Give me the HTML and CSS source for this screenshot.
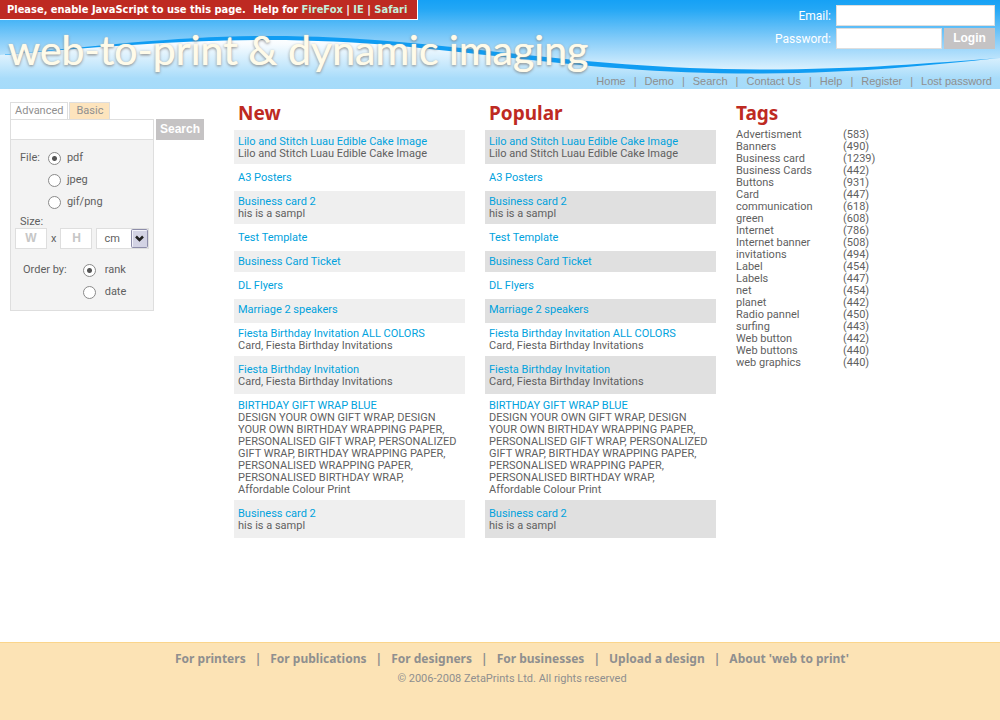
FILE: index.html
```html
<!DOCTYPE html>
<html lang="en">
<head>
<meta charset="utf-8">
<title>web-to-print &amp; dynamic imaging</title>
<link rel="stylesheet" href="styles.css">
</head>
<body>
<header class="header">
  <svg class="wave" viewBox="0 0 1000 89" preserveAspectRatio="none" aria-hidden="true">
    <defs>
      <linearGradient id="sky" x1="0" y1="0" x2="0" y2="89" gradientUnits="userSpaceOnUse">
        <stop offset="0" stop-color="#16a1f5"/>
        <stop offset="0.1" stop-color="#23a7f5"/>
        <stop offset="0.45" stop-color="#87cdf9"/>
        <stop offset="0.8" stop-color="#e0f3fe"/>
      </linearGradient>
      <linearGradient id="haze" x1="0" y1="36" x2="0" y2="89" gradientUnits="userSpaceOnUse">
        <stop offset="0" stop-color="#ffffff"/>
        <stop offset="0.15" stop-color="#f8fcff"/>
        <stop offset="0.8" stop-color="#a8dcfa"/>
        <stop offset="1" stop-color="#a5dbfa"/>
      </linearGradient>
    </defs>
    <rect width="1000" height="89" fill="url(#sky)"/>
    <path d="M0 55C100 47 180 38 270 38C440 38 560 72 760 72C860 72 930 64 1000 58V89H0Z" fill="url(#haze)"/>
    <path d="M0 55C100 46 180 36 270 36C440 36 560 69 760 69.500C860 69.500 930 63 1000 58C930 65 860 73 760 73.500C560 74 440 40 270 40C180 40 100 47 0 55Z" fill="#109df3"/>
  </svg>
  <div class="brand">
    <p class="notice">Please, enable JavaScript to use this page. <span class="help">Help for <a href="#">FireFox</a> | <a href="#">IE</a> | <a href="#">Safari</a></span></p>
    <h1 class="title">web-to-print &amp; dynamic imaging</h1>
  </div>
  <div class="account">
    <form class="login">
      <label for="email">Email:</label>
      <input class="box wide" id="email" type="email">
      <label for="password">Password:</label>
      <input class="box" id="password" type="password">
      <button class="btn" type="button">Login</button>
    </form>
    <nav class="topnav">
      <a href="#">Home</a><span>|</span><a href="#">Demo</a><span>|</span><a href="#">Search</a><span>|</span><a href="#">Contact Us</a><span>|</span><a href="#">Help</a><span>|</span><a href="#">Register</a><span>|</span><a href="#">Lost password</a>
    </nav>
  </div>
</header>

<main class="main">
  <form class="search">
    <div class="tabs">
      <button class="tab" type="button">Advanced</button>
      <button class="tab basic" type="button">Basic</button>
    </div>
    <div class="query">
      <input class="box keywords" type="search" aria-label="Keywords">
      <button class="btn" type="button">Search</button>
    </div>
    <div class="panel">
      <div class="group file" role="radiogroup" aria-labelledby="file-label">
        <span id="file-label">File:</span>
        <div class="choices">
          <label><input type="radio" name="file" checked>pdf</label>
          <label><input type="radio" name="file">jpeg</label>
          <label><input type="radio" name="file">gif/png</label>
        </div>
      </div>
      <div class="size-title">Size:</div>
      <div class="size">
        <input class="box dim" placeholder="W" aria-label="Width">
        <span>x</span>
        <input class="box dim" placeholder="H" aria-label="Height">
        <div class="unit">
          <select class="box" aria-label="Unit"><option>cm</option><option>in</option></select>
          <svg class="arrow" viewBox="0 0 17 19" aria-hidden="true">
            <rect x="0.500" y="0.500" width="16" height="18" rx="1" fill="#d3d3e4" stroke="#8d8da9"/>
            <path d="M1.500 17.500V1.500H15.500" fill="none" stroke="#f3f3fa"/>
            <path d="M5 7.500L8.500 11L12 7.500" fill="none" stroke="#222" stroke-width="2.500"/>
          </svg>
        </div>
      </div>
      <div class="group order" role="radiogroup" aria-labelledby="order-label">
        <span id="order-label">Order by:</span>
        <div class="choices">
          <label><input type="radio" name="order" checked>rank</label>
          <label><input type="radio" name="order">date</label>
        </div>
      </div>
    </div>
  </form>

  <section>
    <h2>New</h2>
    <ul class="list">
      <li class="first"><a href="#">Lilo and Stitch Luau Edible Cake Image</a><p>Lilo and Stitch Luau Edible Cake Image</p></li>
      <li class="spaced"><a href="#">A3 Posters</a></li>
      <li><a href="#">Business card 2</a><p>his is a sampl</p></li>
      <li class="spaced"><a href="#">Test Template</a></li>
      <li><a href="#">Business Card Ticket</a></li>
      <li class="spaced"><a href="#">DL Flyers</a></li>
      <li class="loose"><a href="#">Marriage 2 speakers</a></li>
      <li><a href="#">Fiesta Birthday Invitation ALL COLORS</a><p>Card, Fiesta Birthday Invitations</p></li>
      <li class="roomy"><a href="#">Fiesta Birthday Invitation</a><p>Card, Fiesta Birthday Invitations</p></li>
      <li class="even"><a href="#">BIRTHDAY GIFT WRAP BLUE</a><p>DESIGN YOUR OWN GIFT WRAP, DESIGN<br>YOUR OWN BIRTHDAY WRAPPING PAPER,<br>PERSONALISED GIFT WRAP, PERSONALIZED<br>GIFT WRAP, BIRTHDAY WRAPPING PAPER,<br>PERSONALISED WRAPPING PAPER,<br>PERSONALISED BIRTHDAY WRAP,<br>Affordable Colour Print</p></li>
      <li class="roomy"><a href="#">Business card 2</a><p>his is a sampl</p></li>
    </ul>
  </section>

  <section>
    <h2>Popular</h2>
    <ul class="list popular">
      <li class="first"><a href="#">Lilo and Stitch Luau Edible Cake Image</a><p>Lilo and Stitch Luau Edible Cake Image</p></li>
      <li class="spaced"><a href="#">A3 Posters</a></li>
      <li><a href="#">Business card 2</a><p>his is a sampl</p></li>
      <li class="spaced"><a href="#">Test Template</a></li>
      <li><a href="#">Business Card Ticket</a></li>
      <li class="spaced"><a href="#">DL Flyers</a></li>
      <li class="loose"><a href="#">Marriage 2 speakers</a></li>
      <li><a href="#">Fiesta Birthday Invitation ALL COLORS</a><p>Card, Fiesta Birthday Invitations</p></li>
      <li class="roomy"><a href="#">Fiesta Birthday Invitation</a><p>Card, Fiesta Birthday Invitations</p></li>
      <li class="even"><a href="#">BIRTHDAY GIFT WRAP BLUE</a><p>DESIGN YOUR OWN GIFT WRAP, DESIGN<br>YOUR OWN BIRTHDAY WRAPPING PAPER,<br>PERSONALISED GIFT WRAP, PERSONALIZED<br>GIFT WRAP, BIRTHDAY WRAPPING PAPER,<br>PERSONALISED WRAPPING PAPER,<br>PERSONALISED BIRTHDAY WRAP,<br>Affordable Colour Print</p></li>
      <li class="roomy"><a href="#">Business card 2</a><p>his is a sampl</p></li>
    </ul>
  </section>

  <section class="tags">
    <h2>Tags</h2>
    <table>
      <tr><td>Advertisment</td><td>(583)</td></tr>
      <tr><td>Banners</td><td>(490)</td></tr>
      <tr><td>Business card</td><td>(1239)</td></tr>
      <tr><td>Business Cards</td><td>(442)</td></tr>
      <tr><td>Buttons</td><td>(931)</td></tr>
      <tr><td>Card</td><td>(447)</td></tr>
      <tr><td>communication</td><td>(618)</td></tr>
      <tr><td>green</td><td>(608)</td></tr>
      <tr><td>Internet</td><td>(786)</td></tr>
      <tr><td>Internet banner</td><td>(508)</td></tr>
      <tr><td>invitations</td><td>(494)</td></tr>
      <tr><td>Label</td><td>(454)</td></tr>
      <tr><td>Labels</td><td>(447)</td></tr>
      <tr><td>net</td><td>(454)</td></tr>
      <tr><td>planet</td><td>(442)</td></tr>
      <tr><td>Radio pannel</td><td>(450)</td></tr>
      <tr><td>surfing</td><td>(443)</td></tr>
      <tr><td>Web button</td><td>(442)</td></tr>
      <tr><td>Web buttons</td><td>(440)</td></tr>
      <tr><td>web graphics</td><td>(440)</td></tr>
    </table>
  </section>
</main>

<footer class="footer">
  <nav class="footnav">
    <a href="#">For printers</a><span>|</span><a href="#">For publications</a><span>|</span><a href="#">For designers</a><span>|</span><a href="#">For businesses</a><span>|</span><a href="#">Upload a design</a><span>|</span><a href="#">About 'web to print'</a>
  </nav>
  <p>© 2006-2008 ZetaPrints Ltd. All rights reserved</p>
</footer>
</body>
</html>
```
FILE: styles.css
```css
* { box-sizing: border-box; }

body {
  margin: 0;
  min-height: 100vh;
  display: flex;
  flex-direction: column;
  background: #fff;
  color: #5f5f5f;
  font: 11px/12px Tahoma, Roboto, sans-serif;
}

a { color: inherit; text-decoration: none; }
p { margin: 0; }
input, select, button { font: inherit; color: inherit; margin: 0; }

/* Header */
.header {
  position: relative;
  display: flex;
  justify-content: space-between;
  min-height: 89px;
}
.wave { position: absolute; inset: 0; width: 100%; height: 100%; }
.brand, .account { position: relative; }
.brand { display: flex; flex-direction: column; align-items: flex-start; white-space: nowrap; }
.notice {
  padding: 3px 10px 3px 7px;
  background: #be2a22;
  border-right: 1px solid #fff;
  border-bottom: 1px solid #fff;
  color: #fff;
  font: bold 11px/13px Tahoma, "DejaVu Sans Condensed", sans-serif;
  word-spacing: normal;
}
.help { margin-left: 4px; }
.notice a { color: #c4f0dc; }
.title {
  margin: 4px 0 0 8px;
  color: #fffbe9;
  font: 41px/52px Lato, sans-serif;
  text-shadow: 0 0 1px #fffbe9, 0 1px 3px #777;
}
.account {
  display: flex;
  flex-direction: column;
  align-items: flex-end;
  justify-content: space-between;
  padding: 5px 5px 1px 0;
}
.login {
  display: grid;
  grid-template-columns: auto 106px 51px;
  gap: 2px;
  align-items: center;
  color: #fff;
  font-size: 12px;
}
.login label { text-align: right; padding-right: 3px; }
.wide { grid-column: span 2; }
.box {
  width: 100%;
  height: 21px;
  padding: 0 4px;
  border: 1px solid #dedede;
  border-radius: 0;
  background: #fff;
  appearance: none;
}
.btn {
  height: 21px;
  padding: 0 4px;
  border: 0;
  background: #c5c3c4;
  color: #fff;
  font: bold 12px/21px "Liberation Sans", Arial, sans-serif;
}
.topnav {
  display: flex;
  padding-right: 3px;
  color: #8f8f8f;
  font: 11px/14px "Liberation Sans", Arial, sans-serif;
  white-space: nowrap;
}
.topnav span { padding: 0 8px; }

/* Content */
.main {
  flex: 1;
  display: grid;
  grid-template-columns: 204px 231fr 231fr 254fr;
  column-gap: 20px;
  align-items: start;
  padding: 13px 10px 20px;
}
h2 {
  margin: 0;
  padding: 0 4px 5px;
  color: #be2a22;
  font: bold 19px/23px Tahoma, "Noto Sans", sans-serif;
}
.list { margin: 0; padding: 0; list-style: none; }
.list li { padding: 5px 4px 4px; }
.list li:nth-child(odd) { background: #efefef; }
.list.popular li:nth-child(odd) { background: #e0e0e0; }
.list .first { padding-top: 6px; }
.list .spaced { padding: 8px 4px 7px; }
.list .loose { padding-bottom: 7px; }
.list .roomy { padding: 8px 4px 6px; }
.list .even { padding-top: 6px; }
.list a { color: #00a2dd; }
.tags h2 { padding: 0 0 4px; }
.tags table { border-collapse: collapse; }
.tags td { padding: 0; }
.tags td:first-child { width: 107px; }

/* Search form */
.tabs { display: flex; gap: 1px; }
.tab {
  height: 17px;
  padding: 0 4px;
  border: 1px solid #dedede;
  border-bottom: 0;
  background: #fff;
  color: #8f8f8f;
}
.basic { padding: 0 6px; background: #fde4bd; }
.query { display: flex; gap: 2px; }
.keywords { width: 144px; }
.panel {
  width: 144px;
  padding: 7px 4px 7px;
  border: 1px solid #dedede;
  border-top: 0;
  background: #f3f3f3;
}
.group { display: flex; line-height: 22px; }
.file { padding-left: 5px; gap: 8px; }
.order { padding-left: 8px; gap: 16px; margin-top: 10px; }
.choices label { display: flex; align-items: center; gap: 6px; }
.order label { gap: 9px; }
input[type="radio"] {
  appearance: none;
  width: 13px;
  height: 13px;
  border: 1px solid #8a8a8a;
  border-radius: 50%;
  background: #fff;
}
input[type="radio"]:checked {
  background: radial-gradient(circle, #555 0 2px, #fff 3px);
}
.size-title { padding: 2px 5px 0; line-height: 13px; }
.size { display: flex; align-items: center; gap: 4px; }
.dim { width: 32px; text-align: center; }
.dim::placeholder {
  color: #c6c6c6;
  font: bold 12px/19px "Liberation Sans", Arial, sans-serif;
}
.unit { position: relative; width: 54px; }
.unit .box { padding-left: 7px; }
.arrow { position: absolute; right: 1px; top: 1px; width: 17px; height: 19px; pointer-events: none; }

/* Footer */
.footer {
  min-height: 78px;
  padding: 8px 0 20px 24px;
  border-top: 1px solid #fbd58b;
  background: #fce3b5;
  color: #8f8f8f;
  text-align: center;
}
.footnav {
  display: flex;
  justify-content: center;
  padding-bottom: 6px;
  font: bold 12px/16px Tahoma, "Noto Sans", sans-serif;
}
.footnav span { padding: 0 9px; }
```
